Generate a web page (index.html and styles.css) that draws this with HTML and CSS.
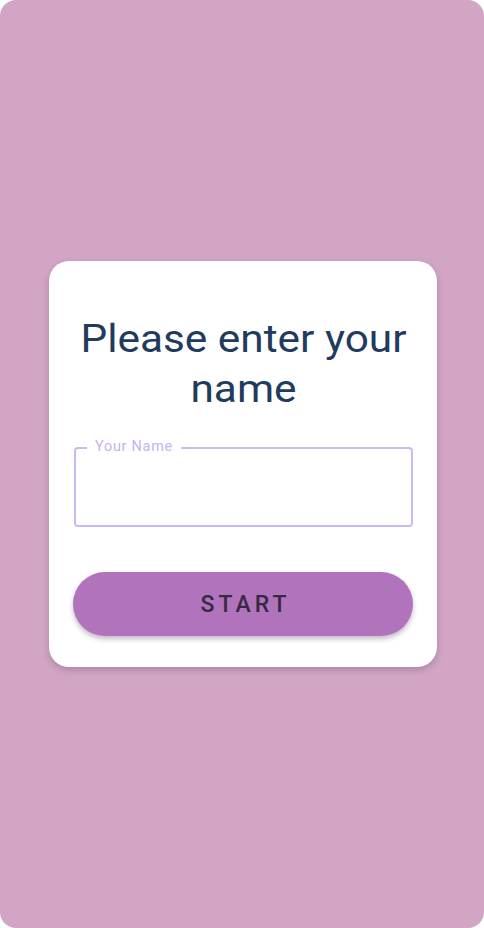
FILE: index.html
```html
<!DOCTYPE html>
<html>
<head>
<meta charset="utf-8">
<link rel="stylesheet" href="styles.css">
</head>
<body>
<div class="screen">
  <div class="card">
    <h1 class="title">Please enter your name</h1>
    <div class="field">
      <span class="field-label">Your Name</span>
      <input class="field-input" type="text">
    </div>
    <button class="start">START</button>
  </div>
</div>
</body>
</html>
```
FILE: styles.css
```css
html, body {
  margin: 0;
  padding: 0;
  background: #ffffff;
}
body {
  font-family: Roboto, "Liberation Sans", sans-serif;
}
.screen {
  width: 484px;
  height: 928px;
  background: #d1a5c3;
  border-radius: 16px;
  display: flex;
  align-items: center;
  justify-content: center;
  box-sizing: border-box;
}
.card {
  width: 388px;
  height: 406px;
  box-sizing: border-box;
  background: #ffffff;
  border-radius: 20px;
  padding: 53px 24px 31px 25px;
  display: flex;
  flex-direction: column;
  box-shadow: 0 3px 6px rgba(80, 40, 70, 0.25);
  margin-left: 2px;
}
.title {
  margin: 0;
  font-weight: 400;
  font-size: 38px;
  line-height: 50px;
  text-align: center;
  color: #1f3b5e;
  transform: scaleX(1.115);
}
.field {
  margin-top: 33px;
  height: 80px;
  box-sizing: border-box;
  border: 2px solid #cdb9f1;
  border-radius: 4px;
  position: relative;
  padding: 0 12px;
  display: flex;
  align-items: center;
}
.field-label {
  position: absolute;
  top: -9px;
  left: 11px;
  padding: 0 8px;
  background: #ffffff;
  font-size: 14.5px;
  line-height: 14px;
  color: #c6b2ed;
  letter-spacing: 0.7px;
}
.field-input {
  border: none;
  outline: none;
  width: 100%;
  font-size: 16px;
  background: transparent;
}
.start {
  margin-top: 45px;
  margin-left: -1px;
  height: 64px;
  border: none;
  border-radius: 32px;
  background: #b273bd;
  color: #362a43;
  font-family: Roboto, "Liberation Sans", sans-serif;
  font-size: 23px;
  font-weight: 500;
  letter-spacing: 4px;
  padding: 0 0 0 5px;
  box-shadow: 0 3px 5px rgba(60, 30, 60, 0.3);
}
```
